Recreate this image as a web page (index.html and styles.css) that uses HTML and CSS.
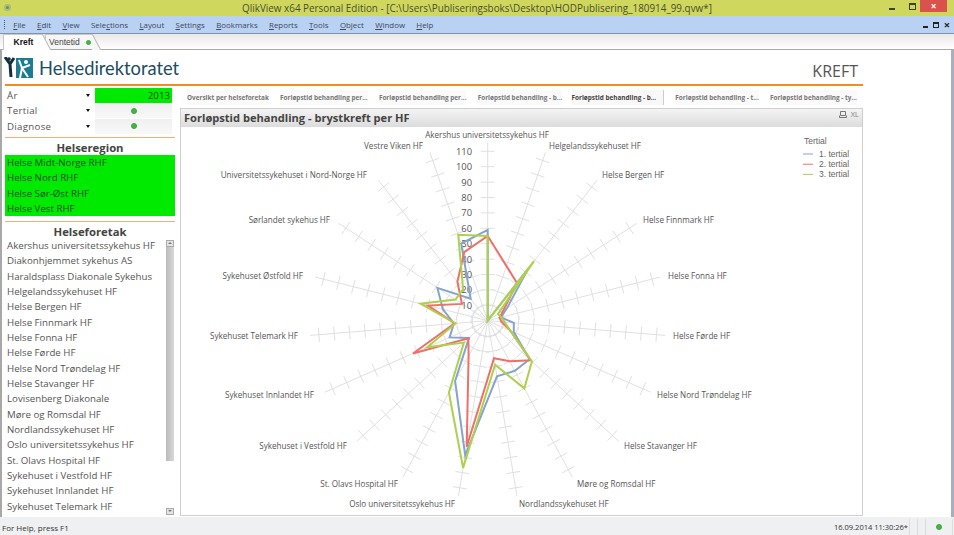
FILE: index.html
```html
<!DOCTYPE html>
<html lang="no">
<head>
  <meta charset="UTF-8" />
  <title>QlikView</title>
  <link rel="stylesheet" href="styles.css">
</head>
<body>

  <div class="titlebar">
    <span class="app-icon"></span>
    <span class="title-text">QlikView x64 Personal Edition - [C:\Users\Publiseringsboks\Desktop\HODPublisering_180914_99.qvw*]</span>
    <span class="win-min"></span>
    <span class="win-max"></span>
    <span class="win-close">×</span>
  </div>

  <div class="menubar">
    <span class="grip"></span>
    <span class="menu-item"><u>F</u>ile</span>
    <span class="menu-item"><u>E</u>dit</span>
    <span class="menu-item"><u>V</u>iew</span>
    <span class="menu-item">Sele<u>c</u>tions</span>
    <span class="menu-item"><u>L</u>ayout</span>
    <span class="menu-item"><u>S</u>ettings</span>
    <span class="menu-item"><u>B</u>ookmarks</span>
    <span class="menu-item"><u>R</u>eports</span>
    <span class="menu-item"><u>T</u>ools</span>
    <span class="menu-item"><u>O</u>bject</span>
    <span class="menu-item"><u>W</u>indow</span>
    <span class="menu-item"><u>H</u>elp</span>
    <span class="doc-controls">
      <span class="doc-min"></span>
      <span class="doc-max"></span>
      <span class="doc-close">×</span>
    </span>
  </div>

  <div class="sheet-tabs">
    <span class="sheet-tab active">Kreft</span>
    <span class="sheet-tab">Ventetid <i class="dot"></i></span>
  </div>

  <div class="workspace">
    <div class="sheet">

      <header class="head">
        <div class="brand">
          <svg class="logo" width="30" height="22" viewBox="0 0 30 22">
            <rect x="12" y="1" width="17" height="20" fill="#1d7c92"/>
            <path d="M1 0 L6 7 M10 1 L6 7 L7 20" fill="none" stroke="#12303c" stroke-width="3"/>
            <circle cx="5" cy="2" r="1.8" fill="#12303c"/>
            <path d="M15 3 L18 11 L16 21 M18 11 L26 8 M18 11 L24 20" fill="none" stroke="#fff" stroke-width="2"/>
            <circle cx="22" cy="5" r="2" fill="#fff"/>
          </svg>
          <span class="brand-name">Helsedirektoratet</span>
        </div>
        <div class="page-name">KREFT</div>
      </header>

      <div class="columns">
        <aside class="side">
          <div class="filter-row">
            <span class="filter-label">År</span><i class="arrow"></i>
            <span class="filter-value picked">2013</span>
          </div>
          <div class="filter-row">
            <span class="filter-label">Tertial</span><i class="arrow"></i>
            <span class="filter-value"><i class="dot"></i></span>
          </div>
          <div class="filter-row">
            <span class="filter-label">Diagnose</span><i class="arrow"></i>
            <span class="filter-value"><i class="dot"></i></span>
          </div>

          <h3 class="box-title">Helseregion</h3>
          <ul class="region-list">
            <li>Helse Midt-Norge RHF</li>
            <li>Helse Nord RHF</li>
            <li>Helse Sør-Øst RHF</li>
            <li>Helse Vest RHF</li>
          </ul>

          <h3 class="box-title second">Helseforetak</h3>
          <div class="hf-box">
            <ul class="hf-list">
              <li>Akershus universitetssykehus HF</li>
              <li>Diakonhjemmet sykehus AS</li>
              <li>Haraldsplass Diakonale Sykehus</li>
              <li>Helgelandssykehuset HF</li>
              <li>Helse Bergen HF</li>
              <li>Helse Finnmark HF</li>
              <li>Helse Fonna HF</li>
              <li>Helse Førde HF</li>
              <li>Helse Nord Trøndelag HF</li>
              <li>Helse Stavanger HF</li>
              <li>Lovisenberg Diakonale</li>
              <li>Møre og Romsdal HF</li>
              <li>Nordlandssykehuset HF</li>
              <li>Oslo universitetssykehus HF</li>
              <li>St. Olavs Hospital HF</li>
              <li>Sykehuset i Vestfold HF</li>
              <li>Sykehuset Innlandet HF</li>
              <li>Sykehuset Telemark HF</li>
            </ul>
            <div class="scroll">
              <span class="scroll-btn up"></span>
              <span class="scroll-thumb"></span>
              <span class="scroll-btn down"></span>
            </div>
          </div>
        </aside>

        <main class="main">
          <nav class="report-tabs">
            <span class="report-tab">Oversikt per helseforetak</span>
            <span class="report-tab">Forløpstid behandling per...</span>
            <span class="report-tab">Forløpstid behandling per...</span>
            <span class="report-tab">Forløpstid behandling - b...</span>
            <span class="report-tab current">Forløpstid behandling - b...</span>
            <span class="report-tab">Forløpstid behandling - t...</span>
            <span class="report-tab">Forløpstid behandling - ty...</span>
          </nav>
          <section class="chart-box">
            <div class="chart-caption">
              <span class="chart-title">Forløpstid behandling - brystkreft per HF</span>
              <span class="caption-tools">
                <svg width="8" height="7" viewBox="0 0 8 7"><path d="M1.5 .5H6.5V4.5H1.5ZM.5 4.5V6.5H7.5V4.5" fill="none" stroke="#777"/></svg>
                <span class="xl">XL</span>
              </span>
            </div>
            <svg id="radar" class="radar" viewBox="181 127 681 388"></svg>
          </section>
        </main>
      </div>
    </div>
    <div class="doc-scroll"></div>
  </div>

  <footer class="statusbar">
    <span>For Help, press F1</span>
    <span class="status-right">
      <span class="status-date">16.09.2014 11:30:26*</span>
      <span class="status-cell"></span>
      <span class="status-cell"></span>
      <span class="status-cell wide"><i class="dot"></i></span>
      <span class="status-cell thin"></span>
    </span>
  </footer>

  <script src="chart.js"></script>
</body>
</html>
```

FILE: styles.css
```css
* {
  box-sizing: border-box;
}
body {
  margin: 0;
  width: 954px;
  height: 535px;
  overflow: hidden;
  display: flex;
  flex-direction: column;
  font-family: "Open Sans", sans-serif;
  color: #555;
  background: #fff;
}
ul {
  list-style: none;
  margin: 0;
  padding: 0;
}

.dot {
  display: inline-block;
  width: 6px;
  height: 6px;
  border-radius: 50%;
  background: #2fc42f;
  border: 1px solid #4f9a4f;
}

/* window frame */
.titlebar {
  height: 16px;
  flex: none;
  display: flex;
  align-items: center;
  position: relative;
  background: #cfd75f;
}
.app-icon {
  position: absolute;
  left: 4px;
  top: 4px;
  width: 7px;
  height: 7px;
  border-radius: 50%;
  background: #6f8f6a;
  border: 2px solid #a9bb7a;
}
.title-text {
  width: 100%;
  text-align: center;
  font-size: 9.9px;
  color: #4a4f2a;
}
.win-min {
  position: absolute;
  left: 889px;
  top: 8px;
  width: 6px;
  height: 2px;
  background: #3e4320;
}
.win-max {
  position: absolute;
  left: 909px;
  top: 3px;
  width: 7px;
  height: 7px;
  border: 1px solid #3e4320;
  border-top-width: 2px;
}
.win-close {
  position: absolute;
  left: 920px;
  top: 0;
  width: 27px;
  height: 12px;
  background: #d9534c;
  color: #fff;
  font-size: 10px;
  line-height: 12px;
  font-weight: bold;
  text-align: center;
}
.menubar {
  height: 18px;
  flex: none;
  display: flex;
  align-items: center;
  gap: 11.3px;
  padding-left: 4px;
  background: #b9d1f3;
  border-bottom: 1px solid #8593a8;
  font-size: 7.9px;
  color: #3d4a5c;
}
.grip {
  width: 1px;
  height: 9px;
  margin-right: -3px;
  border-left: 1px dotted #44546a;
}
.menu-item u {
  text-decoration-thickness: 1px;
}
.doc-controls {
  margin-left: auto;
  display: flex;
  align-items: center;
  gap: 5px;
  padding-right: 4px;
  color: #222;
}
.doc-min {
  width: 5px;
  height: 2px;
  margin-top: 5px;
  background: #222;
}
.doc-max {
  width: 6px;
  height: 6px;
  border: 1px solid #222;
  border-top-width: 2px;
}
.doc-close {
  font-size: 11px;
  line-height: 10px;
  font-weight: bold;
}

.sheet-tabs {
  height: 16px;
  flex: none;
  display: flex;
  align-items: flex-end;
  padding-left: 3px;
  background: linear-gradient(#e9e9e9, #fff);
  border-bottom: 1px solid #a9a9a9;
  font-family: "Liberation Sans", sans-serif;
  font-size: 8.5px;
}
.sheet-tab {
  height: 15px;
  width: 40px;
  margin-right: 7px;
  padding-top: 2px;
  text-align: center;
  color: #444;
  position: relative;
  background: #fff;
  border-top: 1px solid #c8c8c8;
  border-left: 1px solid #c8c8c8;
}
.sheet-tab::after {
  content: "";
  position: absolute;
  top: -1px;
  right: -4px;
  width: 8px;
  height: 15px;
  background: inherit;
  border-right: 1px solid #b0b0b0;
  border-top: 1px solid #c8c8c8;
  transform: skewX(28deg);
  z-index: 1;
}
.sheet-tab.active {
  font-weight: bold;
  color: #111;
  z-index: 2;
  margin-bottom: -1px;
  height: 16px;
}
.sheet-tab:not(.active) {
  width: 48px;
  margin-left: -5px;
  background: #f6f6f6;
  text-align: left;
  padding-left: 3px;
}
.sheet-tab .dot {
  width: 5px;
  height: 5px;
  margin-left: 4px;
  position: relative;
  z-index: 3;
}

.workspace {
  flex: 1;
  min-height: 0;
  display: flex;
}
.sheet {
  flex: 1;
  padding: 0 88px 0 3px;
  border-left: 2px solid #a8a8a8;
}
.doc-scroll {
  width: 3px;
  background: #a8b0c0;
}

/* sheet header */
.head {
  height: 36px;
  display: flex;
  align-items: flex-start;
  justify-content: space-between;
  border-bottom: 2px solid #f58a1f;
}
.brand {
  display: flex;
  align-items: center;
  padding-top: 7px;
}
.logo {
  margin: 0 5px 0 -1px;
}
.brand-name {
  font-family: Lato, sans-serif;
  font-size: 18.3px;
  line-height: 22px;
  color: #1c4d62;
}
.page-name {
  padding: 11px 5px 0 0;
  font-size: 16px;
  line-height: 20px;
  color: #555;
}

.columns {
  display: flex;
  gap: 5px;
}

/* selection boxes on the left */
.side {
  width: 170px;
  flex: none;
  padding-top: 2px;
  font-size: 9.7px;
}
.filter-row {
  height: 15.33px;
  display: flex;
  align-items: center;
  position: relative;
}
.filter-label {
  width: 81px;
  padding-left: 2px;
  letter-spacing: .3px;
}
.arrow {
  width: 0;
  height: 0;
  margin-right: 3px;
  border: 2px solid transparent;
  border-top: 3px solid #111;
  border-bottom: 0;
}
.filter-value {
  width: 77px;
  height: 15px;
  display: flex;
  align-items: center;
  justify-content: center;
  margin-left: 2px;
  background: linear-gradient(#f0f0f0, #f8f8f8);
}
.filter-value.picked {
  justify-content: flex-end;
  padding-right: 2px;
  background: #00ea00;
  color: #1a4a1e;
}
.box-title {
  margin: 3px 0 0;
  padding-top: 1px;
  height: 18px;
  border-top: 1px solid #f0b27a;
  text-align: center;
  font-size: 11.3px;
  line-height: 17px;
  color: #444;
}
.box-title.second {
  margin-top: 5px;
  height: 17px;
}
.region-list {
  background: #00ea00;
  height: 61px;
  color: #1a4a1e;
}
.region-list li,
.hf-list li {
  height: 15.35px;
  line-height: 15.35px;
  padding-left: 2px;
  white-space: nowrap;
}
.hf-box {
  display: flex;
  height: 279px;
}
.hf-list {
  flex: 1;
}
.scroll {
  width: 8px;
  margin-right: 1px;
  padding: 2px 0 2px;
  display: flex;
  flex-direction: column;
}
.scroll-btn {
  height: 7px;
  display: flex;
  align-items: center;
  justify-content: center;
  background: #e4e4e4;
  border: 1px solid #aaa;
}
.scroll-btn::before {
  content: "";
  border: 2px solid transparent;
  border-top: 0;
  border-bottom: 2px solid #777;
}
.scroll-btn.down::before {
  border-bottom: 0;
  border-top: 2px solid #777;
}
.scroll-thumb {
  height: 214px;
  background: linear-gradient(90deg, #bbb, #d8d8d8);
}
.scroll-btn.down {
  margin-top: auto;
}

/* tabs and chart */
.main {
  width: 683px;
  flex: none;
  padding-top: 4px;
}
.report-tabs {
  height: 18px;
  display: flex;
  justify-content: space-between;
  padding: 0 6px 0 7px;
  font-size: 6.4px;
  font-weight: bold;
  color: #777;
}
.report-tab {
  height: 15px;
  line-height: 13px;
  padding: 1px 0;
  background: #fafafa;
  white-space: nowrap;
}
.report-tab.current {
  margin-left: -2px;
  padding: 1px 7px 1px 0;
  color: #444;
  background: #f8f8f8;
  border-right: 1px solid #ccc;
}
.chart-box {
  height: 408px;
  display: flex;
  flex-direction: column;
  border: 1px solid #cfcfcf;
}
.chart-caption {
  height: 18px;
  flex: none;
  display: flex;
  justify-content: space-between;
  background: linear-gradient(#f4f4f4, #dcdcdc);
}
.chart-title {
  padding-left: 3px;
  font-size: 11.1px;
  font-weight: bold;
  line-height: 17px;
  color: #444;
}
.caption-tools {
  display: flex;
  align-items: flex-start;
  gap: 3px;
  padding: 2px 3px 0 0;
}
.xl {
  font-family: "Liberation Sans", sans-serif;
  font-size: 7px;
  line-height: 8px;
  color: #888;
}
.radar {
  flex: 1;
  min-height: 0;
  display: block;
}
.radar .hf-label {
  font-size: 8.1px;
  fill: #555;
}
.radar .axis-value {
  font-size: 9.4px;
  fill: #555;
  text-anchor: end;
}
.radar .legend-text {
  font-family: "Liberation Sans", sans-serif;
  font-size: 8.5px;
  fill: #666;
}

.statusbar {
  height: 18px;
  flex: none;
  display: flex;
  align-items: center;
  justify-content: space-between;
  padding: 2px 0 0 2px;
  background: #eef0f1;
  font-size: 8px;
  color: #333;
}
.status-right {
  display: flex;
  align-items: center;
  height: 100%;
}
.status-date {
  font-size: 7.5px;
  padding-right: 1px;
}
.status-cell {
  width: 8px;
  height: 100%;
  border-left: 1px solid #ddd;
  display: flex;
  align-items: center;
  justify-content: center;
}
.status-cell.wide {
  width: 27px;
}
.status-cell.thin {
  width: 2px;
}
```

FILE: chart.js
```js
// radar chart: forløpstid per helseforetak, one line per tertial
const svg = document.getElementById('radar');
const NS = 'http://www.w3.org/2000/svg';

const CX = 487.7;
const CY = 320.7;
const PX_PER_UNIT = 1.54;
const SPOKE_LEN = 178;
const TICK = 7;

// [name, x, y, anchor]
const etiketter = [
  ['Akershus universitetssykehus HF', 487, 138, 'middle'],
  ['Helgelandssykehuset HF', 549, 149, 'start'],
  ['Helse Bergen HF', 602, 178, 'start'],
  ['Helse Finnmark HF', 643, 223, 'start'],
  ['Helse Fonna HF', 668, 279, 'start'],
  ['Helse Førde HF', 673, 339, 'start'],
  ['Helse Nord Trøndelag HF', 657, 398, 'start'],
  ['Helse Stavanger HF', 624, 449, 'start'],
  ['Møre og Romsdal HF', 577, 487, 'start'],
  ['Nordlandssykehuset HF', 519, 507, 'start'],
  ['Oslo universitetssykehus HF', 455, 507, 'end'],
  ['St. Olavs Hospital HF', 398, 487, 'end'],
  ['Sykehuset i Vestfold HF', 347, 449, 'end'],
  ['Sykehuset Innlandet HF', 314, 398, 'end'],
  ['Sykehuset Telemark HF', 298, 339, 'end'],
  ['Sykehuset Østfold HF', 303, 279, 'end'],
  ['Sørlandet sykehus HF', 330, 223, 'end'],
  ['Universitetssykehuset i Nord-Norge HF', 367, 178, 'end'],
  ['Vestre Viken HF', 423, 149, 'end']
];

const serier = [
  { navn: '1. tertial', farge: '#86a4cb', verdier: [59, 0, 43, 15, 9, 17, 18.5, 37, 37, 36.7, 88.6, 44.5, 16.5, 27, 22, 30, 39, 18, 53] },
  { navn: '2. tertial', farge: '#ee7068', verdier: [55, 37.5, 31, 12, 8, 9, 16, 38, 30, 24.7, 83, 26, 17, 53, 21.5, 40, 20, 32, 47] },
  { navn: '3. tertial', farge: '#add04e', verdier: [55, 0, 49, 8, 9, 11, 16, 39, 50, 29, 97, 53, 21, 43, 21, 45, 25, 26, 59] }
];

function lagElement(tag, attrs, tekst) {
  const el = document.createElementNS(NS, tag);
  Object.keys(attrs).forEach(k => el.setAttribute(k, attrs[k]));
  if (tekst) el.textContent = tekst;
  svg.appendChild(el);
  return el;
}

function retning(i) {
  const a = i * 2 * Math.PI / etiketter.length;
  return [Math.sin(a), -Math.cos(a)];
}

function tegnRutenett() {
  let d = '';
  etiketter.forEach((e, i) => {
    const [dx, dy] = retning(i);
    d += `M${CX} ${CY}L${CX + dx * SPOKE_LEN} ${CY + dy * SPOKE_LEN}`;
    for (let v = 10; v <= 110; v += 10) {
      const r = v * PX_PER_UNIT;
      const x = CX + dx * r;
      const y = CY + dy * r;
      d += `M${x - dy * TICK} ${y + dx * TICK}L${x + dy * TICK} ${y - dx * TICK}`;
    }
  });
  lagElement('path', { d: d, fill: 'none', stroke: '#e0e0e0', 'stroke-width': 1 });
}

function tegnTekster() {
  for (let v = 10; v <= 110; v += 10) {
    lagElement('text', { class: 'axis-value', x: 472, y: CY - v * PX_PER_UNIT + 3.5 }, String(v));
  }
  etiketter.forEach(e => {
    lagElement('text', { class: 'hf-label', x: e[1], y: e[2], 'text-anchor': e[3] }, e[0]);
  });
}

function tegnSerier() {
  serier.forEach(s => {
    const punkter = s.verdier.map((v, i) => {
      const [dx, dy] = retning(i);
      const r = v * PX_PER_UNIT;
      return (CX + dx * r).toFixed(1) + ',' + (CY + dy * r).toFixed(1);
    });
    lagElement('polygon', {
      points: punkter.join(' '),
      fill: 'none',
      stroke: s.farge,
      'stroke-width': 2,
      'stroke-linejoin': 'miter'
    });
  });
}

function tegnForklaring() {
  lagElement('text', { class: 'legend-text', x: 804, y: 144 }, 'Tertial');
  serier.forEach((s, i) => {
    const y = 154 + i * 10.2;
    lagElement('line', { x1: 803, x2: 813, y1: y, y2: y, stroke: s.farge, 'stroke-width': 1 });
    lagElement('text', { class: 'legend-text', x: 819, y: y + 3 }, s.navn);
  });
}

tegnRutenett();
tegnTekster();
tegnSerier();
tegnForklaring();
```
